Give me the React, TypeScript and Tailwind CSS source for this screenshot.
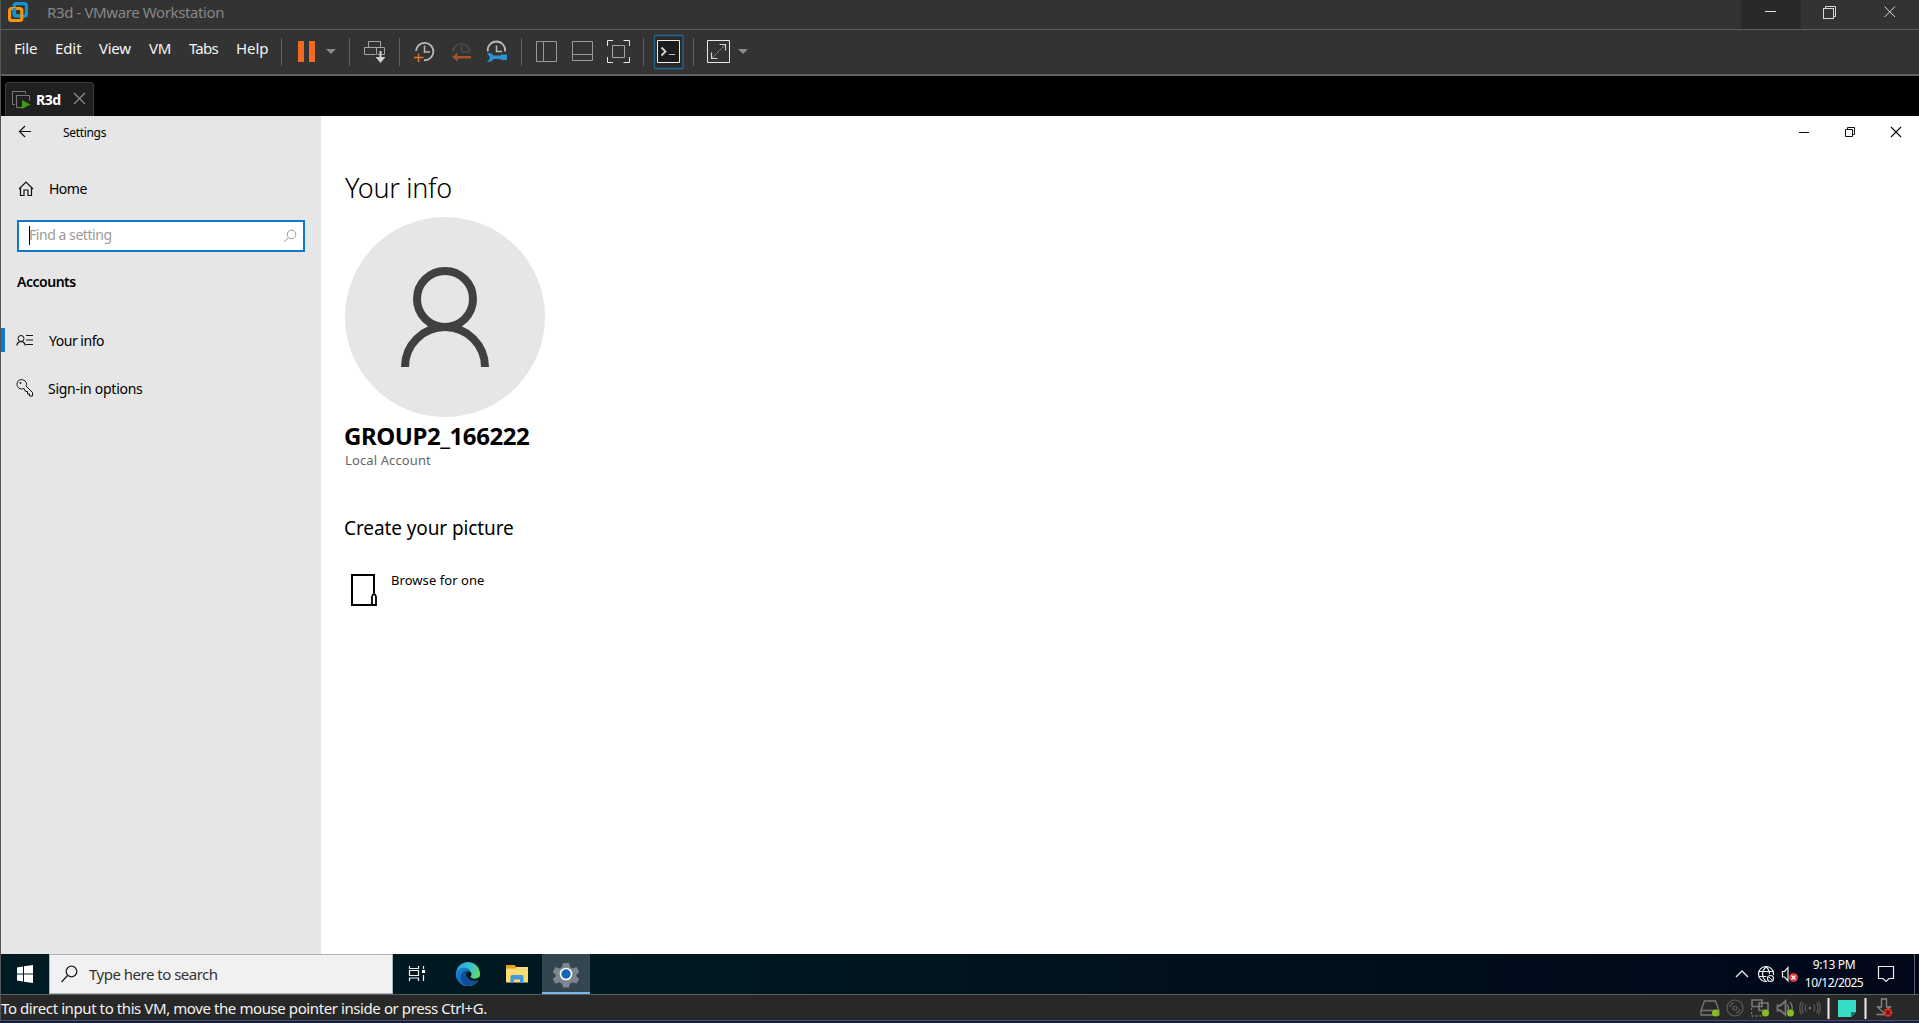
import React from "react";

type PicProps = {
  x: number;
  y: number;
  w: number;
  h: number;
  className?: string;
  children: React.ReactNode;
};

/** Line drawing whose view box starts at (x, y) and is w by h pixels. */
function Pic({ x, y, w, h, className = "", children }: PicProps) {
  return (
    <svg
      width={w}
      height={h}
      viewBox={`${x} ${y} ${w} ${h}`}
      fill="none"
      className={`block shrink-0 ${className}`}
    >
      {children}
    </svg>
  );
}

function TitleBar() {
  return (
    <header className="flex h-[29px] shrink-0 items-start bg-[#333333]">
      <Pic x={8} y={2} w={20} h={20} className="ml-[7px] mt-[2px]">
        <rect x="14.2" y="3.7" width="12.2" height="12.2" rx="2" stroke="#1594cf" strokeWidth="3.2" />
        <rect x="9.6" y="8.5" width="12.2" height="12" rx="2" stroke="#f3950f" strokeWidth="3.2" />
        <path d="M14.2 8V14a2 2 0 0 0 2 2H20" stroke="#1594cf" strokeWidth="3.2" />
      </Pic>
      <span className="ml-[19px] w-[400px] whitespace-nowrap text-[15px] leading-6 tracking-[-0.39px] text-[#868686]">
        R3d - VMware Workstation
      </span>
      <div className="ml-auto flex h-full">
        <div className="flex h-full w-[60px] bg-[#292929] pl-6 pt-[11px]">
          <span className="h-px w-[11px] bg-[#e0e0e0]" />
        </div>
        <Pic x={1801} y={0} w={60} h={29}>
          <rect x="1823.5" y="8.5" width="10" height="10" stroke="#d8d8d8" />
          <path d="M1825.5 8V6.5H1835.5V16.5H1834" stroke="#d8d8d8" />
        </Pic>
        <Pic x={1861} y={0} w={58} h={29}>
          <path d="M1884.5 6.500L1895 17M1895 6.500L1884.500 17" stroke="#d8d8d8" />
        </Pic>
      </div>
    </header>
  );
}

function Separator() {
  return <span className="h-7 w-px shrink-0 bg-[#626262]" />;
}

function Toolbar() {
  return (
    <nav className="flex h-[45px] shrink-0 items-start border-t border-[#5f5f5f] bg-[#333333] pt-2">
      <div className="flex w-[280px] shrink-0 pl-[13px] text-[15px] leading-5 text-[#f5f5f5]">
        <span className="w-[41px] tracking-[-0.2px]">File</span>
        <span className="w-[44px] tracking-[-0.1px]">Edit</span>
        <span className="w-[50px] tracking-[-0.3px]">View</span>
        <span className="w-[40px] tracking-[-0.3px]">VM</span>
        <span className="w-[47px] tracking-[-0.8px]">Tabs</span>
        <span className="tracking-[-0.1px]">Help</span>
      </div>
      <Separator />
      <Pic x={282} y={38} w={67} h={28}>
        <path d="M298 41h6v21h-6zM309 41h6v21h-6z" fill="#f26a21" />
        <path d="M326 49h10l-5 5z" fill="#8a8a8a" />
      </Pic>
      <Separator />
      <Pic x={350} y={38} w={49} h={28}>
        <path d="M368.500 47.500V41.500H380.500V47.500M364.500 47.500H384.500V54.500H377.500M375.500 54.500H364.500V47.500M376.500 47.500V54.500" stroke="#a5a5a5" />
        <path d="M380.500 51V59" stroke="#d0d0d0" strokeWidth="2" />
        <path d="M375.500 57h10l-5 6z" fill="#d0d0d0" />
      </Pic>
      <Separator />
      <Pic x={400} y={38} w={121} h={28}>
        <path d="M416 51a8.700 8.700 0 1 1 8 9.200" stroke="#b9b9b9" strokeWidth="1.800" />
        <path d="M424.500 45.500V52H430" stroke="#b9b9b9" strokeWidth="1.500" />
        <path d="M414 57.500h9.500M418.500 53.500v8.500" stroke="#e0742f" strokeWidth="1.500" />
        <path d="M453 52a8.200 8.200 0 0 1 16.500 0" stroke="#565656" strokeWidth="1.200" />
        <path d="M461.500 45.500V52H468" stroke="#565656" />
        <path d="M452 57l5.500-4.500V56H471v2.500H457.500v3z" fill="#a75228" />
        <path d="M487.800 51.500a8.700 8.700 0 1 1 17.200 0" stroke="#b9b9b9" strokeWidth="1.800" />
        <path d="M496.500 45.500V51.500H502" stroke="#b9b9b9" strokeWidth="1.500" />
        <path d="M487 53.500q4-1.500 6.500 2H500q1-1 2.500-1h4.500v5.500h-4.500q-1.500 0-2.500-1h-6.500q-2 3.500-6.500 3l2.500-2.500v-3z" fill="#2d94d3" />
      </Pic>
      <Separator />
      <Pic x={522} y={38} w={121} h={28}>
        <path d="M536.500 41.500h20v20h-20zM543.500 41.500v20M572.500 41.500h20v19h-20zM572.500 54.500h20" stroke="#999999" />
        <path d="M607.500 46V40.500H613M623.500 40.500H629.500V46M629.500 57V62.500H623.500M613 62.500H607.500V57" stroke="#e8e8e8" />
        <path d="M612.500 45.500h12v12h-12z" stroke="#a5a5a5" />
      </Pic>
      <Separator />
      <Pic x={644} y={34} w={49} h={36} className="-mt-1">
        <rect x="654.500" y="35.500" width="28.500" height="33" rx="1" fill="#292929" stroke="#27698f" strokeWidth="1.300" />
        <path d="M657.500 40.500h22v22h-22z" fill="#1c1c1c" stroke="#eeeeee" />
        <path d="M661.500 47.500l4 4-4 4" stroke="#d8d8d8" strokeWidth="1.800" />
        <path d="M669 54.500h6" stroke="#c0c0c0" />
      </Pic>
      <Separator />
      <Pic x={694} y={38} w={60} h={28}>
        <path d="M707.500 40.500h22v22h-22z" stroke="#e8e8e8" />
        <path d="M711.500 52.500v6h6M719.500 44.500h6v6" stroke="#d0d0d0" strokeWidth="1.200" />
        <path d="M712 58L725 45" stroke="#999999" strokeDasharray="2.500 1" />
        <path d="M738 49h10l-5 5z" fill="#8a8a8a" />
      </Pic>
    </nav>
  );
}

function TabStrip() {
  return (
    <div className="flex h-[42px] shrink-0 items-end border-t-2 border-[#606060] bg-black">
      <div className="ml-[4px] flex h-[34px] w-[89px] items-center rounded-t-[4px] border-x border-t border-[#3c3c3c] bg-[#202020]">
        <Pic x={11} y={89} w={20} h={20} className="ml-[5px]">
          <path d="M15 103.500H12.500V90.500H25.500V93" stroke="#777777" />
          <path d="M22 106.500H16.500V94.500H29.500V100" stroke="#777777" />
          <path d="M22 99l8.500 4.500-8.500 4.500z" fill="#3f9b12" />
        </Pic>
        <span className="ml-[5px] w-[37px] text-[14px] font-bold leading-5 tracking-[-0.45px] text-white">R3d</span>
        <Pic x={73} y={92} w={13} h={13} className="-mt-0.5">
          <path d="M74 93l11 11M85 93L74 104" stroke="#8b8b8b" strokeWidth="1.300" />
        </Pic>
      </div>
    </div>
  );
}

function Sidebar() {
  return (
    <aside className="flex w-[320px] shrink-0 flex-col bg-[#e6e6e6] text-black">
      <div className="flex h-[32px] items-center">
        <Pic x={18} y={124} w={14} h={14} className="-mt-0.5 ml-[17px]">
          <path d="M31 131.500H19.500M25 126l-5.500 5.500L25 137" stroke="#111" strokeWidth="1.200" />
        </Pic>
        <span className="ml-[31px] mt-px text-[12px] leading-5 tracking-[-0.32px]">Settings</span>
      </div>
      <div className="mt-[26px] flex h-[30px] items-center">
        <Pic x={18} y={181} w={16} h={16} className="ml-[17px]">
          <path d="M19 189l7-7 7 7M20.500 188v7.500H24v-5.500h4v5.500h3.500V188" stroke="#111" strokeWidth="1.200" />
        </Pic>
        <span className="ml-[15px] text-[14px] leading-5 tracking-[-0.5px]">Home</span>
      </div>
      <div className="ml-4 mt-[16px] flex h-8 w-[288px] items-center border-2 border-[#0f78cf] bg-white">
        <span className="ml-[10px] h-[19px] w-px -translate-y-px bg-black" />
        <span className="-ml-px -mt-0.5 text-[14px] leading-5 tracking-[-0.45px] text-[#9b9b9b]">Find a setting</span>
        <Pic x={283} y={229} w={14} h={14} className="ml-auto mr-[6px]">
          <circle cx="291.500" cy="234.500" r="4.300" stroke="#999" />
          <path d="M288.300 237.700L284 242" stroke="#999" />
        </Pic>
      </div>
      <h2 className="ml-4 mt-[20px] text-[14px] font-semibold leading-5 tracking-[-0.48px]">Accounts</h2>
      <div className="mt-[36px] flex h-6 items-center">
        <span className="h-6 w-1 bg-[#0f78cf]" />
        <Pic x={16} y={333} w={18} h={13} className="ml-[11px]">
          <circle cx="21" cy="337.500" r="3" stroke="#111" />
          <path d="M17 344.500v-1c1-4 7-4 8 0v1M26 334.500h7M26 339h7M26 343.500h7" stroke="#111" strokeWidth="1.200" />
        </Pic>
        <span className="ml-[15px] mt-px text-[14px] leading-5 tracking-[-0.48px]">Your info</span>
      </div>
      <div className="mt-[24px] flex h-6 items-center">
        <Pic x={16} y={379} w={18} h={18} className="ml-[15px]">
          <path d="M24 388.500c-4 1.500-7-1-7-4.200 0-5.500 7-6.200 9.200-1.800.8 1.700.2 3-.2 3.500l6.500 6.500v3.500h-3v-2h-2v-2.500H25.500z" stroke="#111" />
          <circle cx="20.500" cy="383" r=".9" fill="#111" />
        </Pic>
        <span className="ml-[14px] mt-px text-[14px] leading-5 tracking-[-0.27px]">Sign-in options</span>
      </div>
    </aside>
  );
}

function Content() {
  return (
    <main className="flex grow flex-col bg-white text-black">
      <div className="flex h-8 justify-end">
        <Pic x={1781} y={116} w={138} h={32}>
          <path d="M1799 132.500h10" stroke="#111" />
          <path d="M1845.500 129.500h7v7h-7zM1847.500 129v-1.500h7v7H1853" stroke="#111" />
          <path d="M1891 127l10 10M1901 127l-10 10" stroke="#111" strokeWidth="1.200" />
        </Pic>
      </div>
      <div className="flex flex-col items-start pl-[23px]">
        <h1 className="ml-px mt-[20px] text-[27px] font-light leading-10 tracking-[-0.3px]">Your info</h1>
        <Pic x={345} y={217} w={200} h={200} className="ml-[1px] mt-[9px]">
          <circle cx="445" cy="317" r="100" fill="#e6e6e6" />
          <circle cx="445" cy="299" r="28" stroke="#404040" strokeWidth="8" />
          <path d="M405 367a40 40 0 0 1 80 0" stroke="#404040" strokeWidth="8" />
        </Pic>
        <p className="mt-[4px] text-[24px] font-bold leading-[30px] tracking-[-0.45px]">GROUP2_166222</p>
        <p className="ml-px text-[13px] leading-[18px] tracking-[0.12px] text-[#666666]">Local Account</p>
        <h2 className="mt-[44px] text-[19px] leading-[30px] tracking-[-0.1px]">Create your picture</h2>
        <div className="mt-[30px] flex items-start">
          <Pic x={350} y={573} w={28} h={34} className="ml-[6px]">
            <path d="M374 593V575H352V605H371" stroke="#000" strokeWidth="2" />
            <path d="M372 605v-8.500q2-5 4 0V605z" stroke="#000" strokeWidth="1.800" />
          </Pic>
          <span className="ml-[13px] mt-[-3px] text-[13px] leading-5 tracking-[0.06px]">Browse for one</span>
        </div>
      </div>
    </main>
  );
}

function Taskbar() {
  return (
    <div className="flex h-10 shrink-0 bg-[linear-gradient(90deg,#001b24_0%,#00171f_40%,#000d1b_75%,#01081a_100%)]">
      <Pic x={1} y={954} w={48} h={40}>
        <path d="M17 967.500l6-1v7h-6zM24 966.300l9-1.300v8.500h-9zM17 974.500h6v7l-6-1zM24 974.500h9v8.500l-9-1.300z" fill="#fff" />
      </Pic>
      <div className="flex w-[344px] items-center border border-[#a9b5b9] bg-[#f1f1f1]">
        <Pic x={60} y={965} w={18} h={18} className="ml-[10px]">
          <circle cx="71.500" cy="971.500" r="5.300" stroke="#222" strokeWidth="1.300" />
          <path d="M67.500 975.500l-6 6.500" stroke="#222" strokeWidth="1.300" />
        </Pic>
        <span className="-mt-px ml-[11px] text-[15px] leading-6 tracking-[-0.5px] text-[#333]">Type here to search</span>
      </div>
      <Pic x={393} y={954} w={149} h={40}>
        <path d="M409.500 966v2.500H418.500V966M409.500 981v-3H418.500v3M409.500 970.500h9v5h-9zM423.500 966v3M423.500 975v6" stroke="#eee" strokeWidth="1.200" />
        <path d="M422 970h3v3h-3z" fill="#fff" />
        <defs>
          <linearGradient id="edgeTop" x1="456" y1="965" x2="480" y2="976" gradientUnits="userSpaceOnUse">
            <stop stopColor="#249fdd" />
            <stop offset=".55" stopColor="#38c4cc" />
            <stop offset="1" stopColor="#6ede53" />
          </linearGradient>
          <linearGradient id="edgeLow" x1="456" y1="968" x2="473" y2="986" gradientUnits="userSpaceOnUse">
            <stop stopColor="#1683d5" />
            <stop offset="1" stopColor="#1052a4" />
          </linearGradient>
        </defs>
        <circle cx="468" cy="974" r="12" fill="url(#edgeTop)" />
        <path d="M456 974c0-6 11-9 14.500-3-4-1.500-5.500 2-4.500 4.500 2 4.500 8.500 6 13 3.500-4 8-14 9-19 4-2.500-2-4-5-4-9z" fill="url(#edgeLow)" />
        <path d="M461 977c0-4 4-7 8-6-3 1-3.800 3-3 5 2 4.500 8.500 6 12.500 3.300-3 5-8 6.700-11.500 6.400-4-1-6-5-6-8.700z" fill="#114b99" />
        <path d="M469 971c3 1 3 3.500 1.500 6 2 2.500 7 2 9.500-.5v1.500l-1 2c-5 2-11 0-12.800-4-.8-2.500.3-4.500 2.800-5z" fill="#001720" />
        <path d="M506 965h8.500l2 2H527v7h-21z" fill="#e0a11b" />
        <path d="M506 968.500h9l2-1.500h11v15.500h-22z" fill="#ffdc73" />
        <path d="M510.500 983v-6.500q0-1.500 1.500-1.500h10q1.500 0 1.500 1.500v6.500h-3.500v-3.500h-6v3.500z" fill="#3d9bdd" />
      </Pic>
      <div className="flex w-12 border-b-2 border-[#76b9ed] bg-[#33464f]">
        <Pic x={542} y={954} w={48} h={38}>
          <path d="M563 963h6l1 4 2.500 1.500 4-1.500 2.800 5-3 2.700v1.600l3 2.700-2.800 4.500-4-1.200-2.500 1.400-1 3.800h-6l-1-3.800-2.500-1.400-4 1.200-2.800-4.500 3-2.700v-1.600l-3-2.700 2.800-5 4 1.500 2.500-1.500z" fill="#7e858d" />
          <circle cx="566" cy="974" r="6.300" fill="#fff" />
          <circle cx="566" cy="974" r="4.700" fill="#1266b5" />
        </Pic>
      </div>
      <Pic x={1730} y={954} w={72} h={40} className="ml-auto">
        <path d="M1736 977l6-6 6 6" stroke="#eee" strokeWidth="1.300" />
        <circle cx="1766" cy="974" r="7.500" stroke="#eee" strokeWidth="1.200" />
        <path d="M1758.500 971.500h15M1758.500 976.500h10M1766 966.500q-7 7.500 0 15M1766 966.500q4 4 3.500 8" stroke="#eee" strokeWidth="1.200" />
        <circle cx="1770.500" cy="978.500" r="4.500" fill="#000b1a" />
        <circle cx="1770.500" cy="978.500" r="3" stroke="#eee" strokeWidth="1.200" />
        <path d="M1768.500 976.500l4 4" stroke="#eee" />
        <path d="M1782.500 971.500h2l3.500-4v13.500l-3.500-4h-2z" stroke="#eee" strokeWidth="1.200" />
        <circle cx="1793.500" cy="977.500" r="4.500" fill="#dd3441" />
        <path d="M1791.500 975.500l4 4M1795.500 975.500l-4 4" stroke="#fff" strokeWidth="1.200" />
      </Pic>
      <div className="w-[64px] pt-0.5 text-center text-[12px] leading-[18px] text-white">
        <div className="tracking-[-0.35px]">9:13 PM</div>
        <div className="-mx-2 whitespace-nowrap tracking-[-0.55px]">10/12/2025</div>
      </div>
      <Pic x={1866} y={954} w={53} h={40}>
        <path d="M1878.500 966.500h15v12h-4.500l-3 3-3-3h-4.500z" stroke="#eee" strokeWidth="1.200" />
        <path d="M1914.500 954v40" stroke="#58616b" />
      </Pic>
    </div>
  );
}

function StatusBar() {
  return (
    <footer className="flex h-[26px] shrink-0 border-t border-[#5e5e5e] bg-[#282828]">
      <span className="whitespace-nowrap text-[15px] leading-[26px] tracking-[-0.41px] text-[#f3f3f3]">
        To direct input to this VM, move the mouse pointer inside or press Ctrl+G.
      </span>
      <Pic x={1696} y={995} w={223} h={25} className="ml-auto">
        <g stroke="#777777" strokeWidth="1.300">
          <path d="M1701 1010.500l3.500-9.500h11l3.500 9.500v4.500h-18zM1701 1010.500h18" />
          <path d="M1752 1000h10v6.500h-10zM1759 1007.500V1003h9v7.500h-9zM1763 1010v4" strokeWidth="1.600" />
          <path d="M1751.500 1008v8h10" strokeDasharray="2 2" />
          <path d="M1777.500 1005.500h3l5-4.500v14l-5-4.500h-3z" strokeWidth="1.800" />
          <path d="M1787.500 1004.500q2 3.500 0 7M1790 1002q3 4 2 8" />
        </g>
        <g stroke="#5c5c5c" strokeWidth="1.200">
          <circle cx="1735" cy="1008" r="8" />
          <circle cx="1735" cy="1008" r="2" />
          <path d="M1730 1007a5 5 0 0 1 4-4M1740 1009a5 5 0 0 1-4 4" />
          <path d="M1806.500 1004.500q-2.500 3.500 0 7M1803.500 1003q-3 5 0 10M1801.500 1001.500q-3.500 6.500 0 13M1813.500 1004.500q2.500 3.500 0 7M1816.500 1003q3 5 0 10M1818.500 1001.500q3.500 6.500 0 13" />
        </g>
        <circle cx="1810" cy="1008" r="1.500" fill="#666" />
        <g fill="#86bd20">
          <circle cx="1715.500" cy="1013" r="3.500" />
          <circle cx="1765.500" cy="1013" r="3.500" />
          <circle cx="1790.500" cy="1013" r="3.500" />
        </g>
        <path d="M1827.500 998h2v21h-2zM1864.500 998h2v21h-2z" fill="#eee" />
        <path d="M1838 1000h18v12l-5 5h-13z" fill="#38dcc6" />
        <path d="M1851 1017v-5h5z" fill="#1b796e" />
        <path d="M1881.500 999h5v8h4l-6.500 6-6.500-6h4zM1876.500 1014.500h10" stroke="#888" strokeWidth="1.300" />
        <circle cx="1888" cy="1012.500" r="4.300" fill="#dd3022" />
        <path d="M1886 1010.500l4 4M1890 1010.500l-4 4" stroke="#4e1511" strokeWidth="1.200" />
      </Pic>
    </footer>
  );
}

export default function App() {
  return (
    <div className="flex h-[1023px] w-[1919px] flex-col overflow-hidden bg-[#161d46] font-['Noto_Sans','Open_Sans',sans-serif]">
      <div className="flex h-[1020px] shrink-0 flex-col border-l border-[#555555]">
        <TitleBar />
        <Toolbar />
        <TabStrip />
        <div className="flex h-[838px] shrink-0">
          <Sidebar />
          <Content />
        </div>
        <Taskbar />
        <StatusBar />
      </div>
      <div className="h-px shrink-0 bg-[#46506c]" />
    </div>
  );
}
